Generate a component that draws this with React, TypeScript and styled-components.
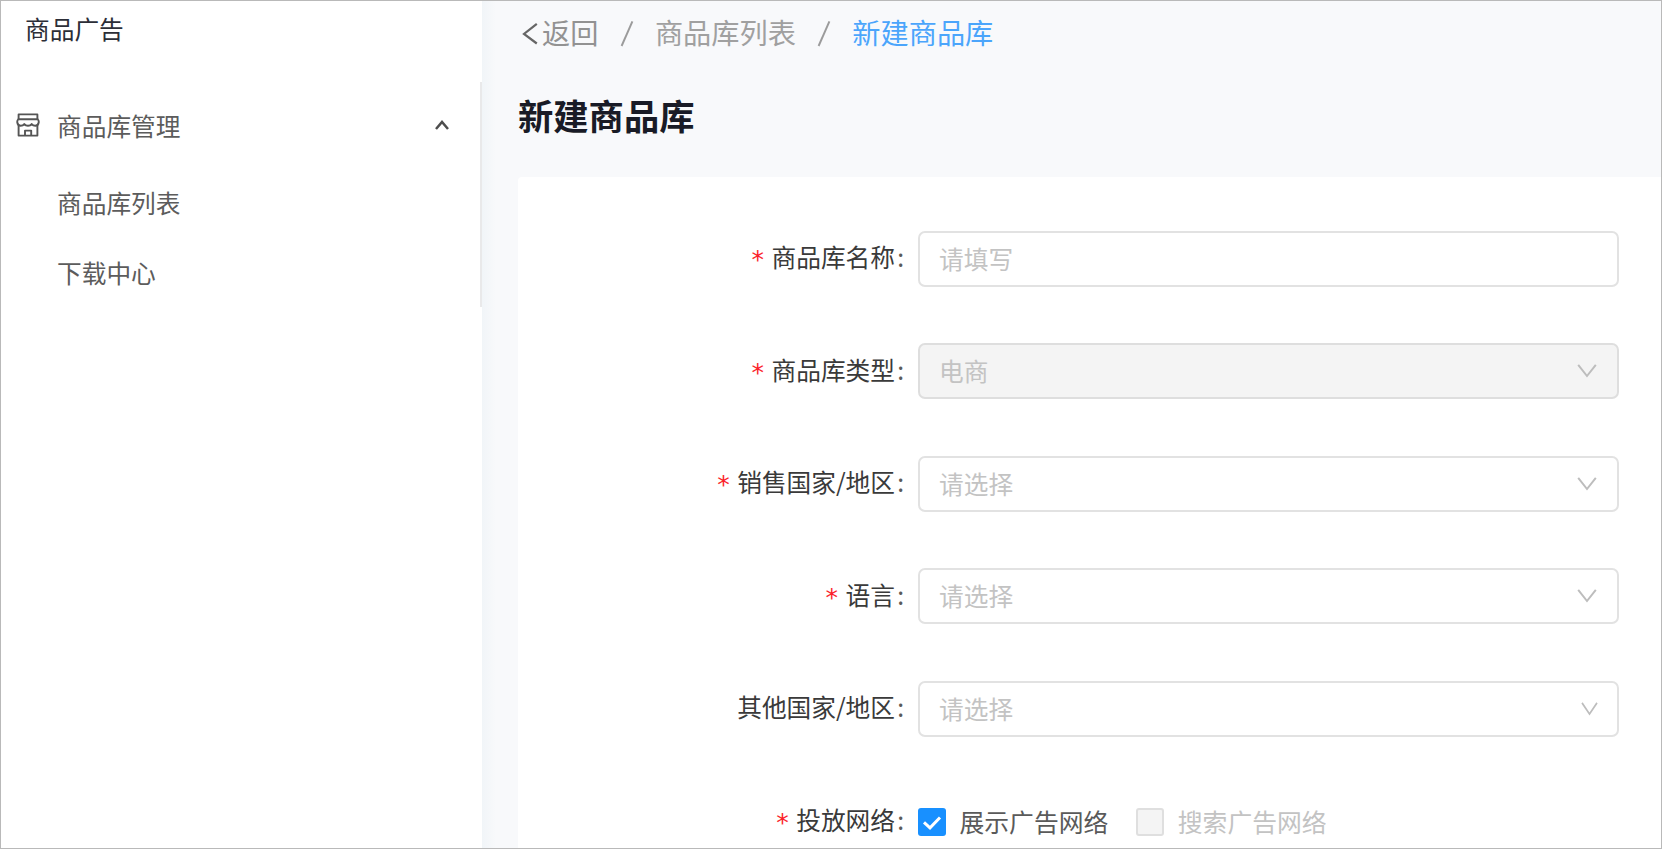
import React from 'react';
import styled, { createGlobalStyle } from 'styled-components';

const GlobalStyle = createGlobalStyle`
  *, *::before, *::after { box-sizing: border-box; }
  body {
    margin: 0;
    font-family: "Noto Sans CJK SC", sans-serif;
    overflow: hidden;
  }
`;

const Page = styled.div`
  display: flex;
  width: 1662px;
  height: 849px;
  border: 1px solid #b9b9b9;
  background: #f8f9fb;
  overflow: hidden;
`;

const Sidebar = styled.aside`
  width: 481px;
  flex: none;
  background: #fff;
  display: flex;
  flex-direction: column;
`;

const Brand = styled.div`
  height: 81px;
  padding: 10px 0 0 24px;
  font-size: 24.7px;
  line-height: 34px;
  color: #2c2e37;
`;

const Menu = styled.nav`
  height: 225px;
  border-right: 2px solid #e9e9ea;
  color: #5c5c5c;
  font-size: 24.7px;
  line-height: 36px;
`;

const MenuGroup = styled.div`
  display: flex;
  align-items: center;
  height: 86px;
  padding: 0 31px 0 15px;
`;

const MenuTitle = styled.span`
  flex: 1;
  margin-left: 17px;
  padding-bottom: 1px;
`;

const MenuItem = styled.div`
  height: 70px;
  display: flex;
  align-items: center;
  padding: 0 0 2px 56px;
`;

const Main = styled.main`
  flex: 1;
  padding-left: 36px;
  background: linear-gradient(90deg, #f1f5f8 0, #f8f9fb 14px);
  display: flex;
  flex-direction: column;
`;

const Breadcrumb = styled.div`
  display: flex;
  flex: none;
  align-items: center;
  height: 66px;
  padding-left: 4px;
  font-size: 28.2px;
  line-height: 40px;
  color: #9b9b9b;
`;

const Crumb = styled.span<{ $active?: boolean }>`
  padding-bottom: 4px;
  color: ${p => (p.$active ? '#4ba5fb' : '#a0a0a0')};
`;

const BackLink = styled.span`
  display: flex;
  align-items: center;
`;

const BackCrumb = styled(Crumb)`
  color: #929292;
`;

const Separator = styled.span`
  width: 56.5px;
  display: flex;
  justify-content: center;
`;

const Title = styled.h1`
  flex: none;
  margin: 0;
  height: 110px;
  padding-top: 23px;
  font-size: 35.3px;
  font-weight: 700;
  line-height: 50px;
  color: #191b26;
`;

const Card = styled.section`
  flex: 1;
  min-height: 0;
  padding: 53.6px 0 0;
  background: #fff;
  border-radius: 4px 0 0 0;
`;

const Row = styled.div`
  display: grid;
  grid-template-columns: 386px 701px;
  column-gap: 14px;
  height: 112.5px;
  align-items: start;
`;

const Label = styled.label`
  display: flex;
  justify-content: flex-end;
  align-items: center;
  height: 51px;
  font-size: 24.7px;
  color: #3a3a3a;
  white-space: nowrap;
`;

const Star = styled.span`
  width: 13px;
  margin-right: 7px;
  font-family: "DejaVu Sans", sans-serif;
  font-size: 25px;
  line-height: 30px;
  padding-top: 8px;
  color: #fb1f2c;
`;

const Colon = styled.span`
  width: 9px;
  text-align: right;
  color: #5a5a5a;
`;

const Field = styled.div<{ $disabled?: boolean }>`
  height: 56px;
  display: flex;
  align-items: center;
  justify-content: space-between;
  padding: 0 20px 0 19px;
  border: 2px solid ${p => (p.$disabled ? '#dedede' : '#e2e2e2')};
  border-radius: 7px;
  background: ${p => (p.$disabled ? '#f4f4f4' : '#fff')};
  color: #c3c3c3;
  font-size: 24.7px;
`;

const FieldText = styled.span`
  padding-bottom: 2px;
`;

const Options = styled.div`
  display: flex;
  align-items: center;
  height: 56px;
  padding-top: 2px;
  gap: 28px;
`;

const Option = styled.div<{ $disabled?: boolean }>`
  display: flex;
  align-items: center;
  gap: 13.5px;
  font-size: 24.8px;
  color: ${p => (p.$disabled ? '#c3c3c3' : '#5a5a5a')};
`;

const Box = styled.span<{ $checked?: boolean }>`
  width: 28px;
  height: 28px;
  display: flex;
  align-items: center;
  justify-content: center;
  border-radius: 3px;
  border: ${p => (p.$checked ? 'none' : '2px solid #dfdfdf')};
  background: ${p => (p.$checked ? '#1890ff' : '#f4f4f4')};
`;

const ShopIcon = () => (
  <svg width="24" height="24" viewBox="0 0 24 24" fill="none" stroke="#555" strokeWidth="1.9" strokeLinejoin="round">
    <path d="M2.6 6.2V1.4h18.8v4.8" />
    <path d="M2.2 6.3h19.6q1.2 1.2.9 3.2-.5 3.2-3.4 3.2-2.3 0-3.6-1.6-1.3 1.6-3.7 1.6t-3.7-1.6q-1.3 1.6-3.6 1.6-2.9 0-3.4-3.2-.3-2 .9-3.2z" />
    <path d="M2.6 12v10.6h18.8V12M9 22.6v-5h6.2v5" />
  </svg>
);

const ChevronUp = () => (
  <svg width="14" height="12" viewBox="0 0 14 12" fill="none" stroke="#4d4d4d" strokeWidth="2.5">
    <path d="M1 10l6-7 6 7" />
  </svg>
);

const BackArrow = () => (
  <svg width="20" height="24" viewBox="0 0 20 24" fill="none" stroke="#666" strokeWidth="2.2">
    <path d="M14.8 1.8L2 11.9l12.8 9.6" />
  </svg>
);

const Slash = () => (
  <svg width="14" height="28" viewBox="0 0 14 28" fill="none" stroke="#9b9b9b" strokeWidth="1.9">
    <path d="M12.4 1.4L1.6 26" />
  </svg>
);

const ChevronDown = ({ narrow }: { narrow?: boolean }) => (
  <svg width={narrow ? 17 : 20} height="16" viewBox="0 0 20 16" preserveAspectRatio="none" fill="none" stroke="#bdbdbd" strokeWidth="2" style={{ marginRight: narrow ? -1 : 0 }}>
    <path d="M1.2 1.8L10 13l8.8-11.2" />
  </svg>
);

const Check = () => (
  <svg width="20" height="16" viewBox="0 0 20 16" fill="none" stroke="#fff" strokeWidth="3">
    <path d="M2 8.3l6 5.5L18 3.5" />
  </svg>
);

type FieldSpec = { label: string; text: string; required?: boolean; select?: boolean; disabled?: boolean; narrow?: boolean };

const fields: FieldSpec[] = [
  { label: '商品库名称', text: '请填写', required: true },
  { label: '商品库类型', text: '电商', required: true, select: true, disabled: true },
  { label: '销售国家/地区', text: '请选择', required: true, select: true },
  { label: '语言', text: '请选择', required: true, select: true },
  { label: '其他国家/地区', text: '请选择', select: true, narrow: true },
];

const FieldLabel = ({ text, required }: { text: string; required?: boolean }) => (
  <Label>
    {required && <Star>*</Star>}
    {text}
    <Colon>:</Colon>
  </Label>
);

export default function App() {
  return (
    <>
      <GlobalStyle />
      <Page>
        <Sidebar>
          <Brand>商品广告</Brand>
          <Menu>
            <MenuGroup>
              <ShopIcon />
              <MenuTitle>商品库管理</MenuTitle>
              <ChevronUp />
            </MenuGroup>
            <MenuItem>商品库列表</MenuItem>
            <MenuItem>下载中心</MenuItem>
          </Menu>
        </Sidebar>
        <Main>
          <Breadcrumb>
            <BackLink><BackArrow /><BackCrumb>返回</BackCrumb></BackLink>
            <Separator><Slash /></Separator>
            <Crumb>商品库列表</Crumb>
            <Separator><Slash /></Separator>
            <Crumb $active>新建商品库</Crumb>
          </Breadcrumb>
          <Title>新建商品库</Title>
          <Card>
            {fields.map(f => (
              <Row key={f.label}>
                <FieldLabel text={f.label} required={f.required} />
                <Field $disabled={f.disabled}>
                  <FieldText>{f.text}</FieldText>
                  {f.select && <ChevronDown narrow={f.narrow} />}
                </Field>
              </Row>
            ))}
            <Row>
              <FieldLabel text="投放网络" required />
              <Options>
                <Option><Box $checked><Check /></Box><FieldText>展示广告网络</FieldText></Option>
                <Option $disabled><Box /><FieldText>搜索广告网络</FieldText></Option>
              </Options>
            </Row>
          </Card>
        </Main>
      </Page>
    </>
  );
}
